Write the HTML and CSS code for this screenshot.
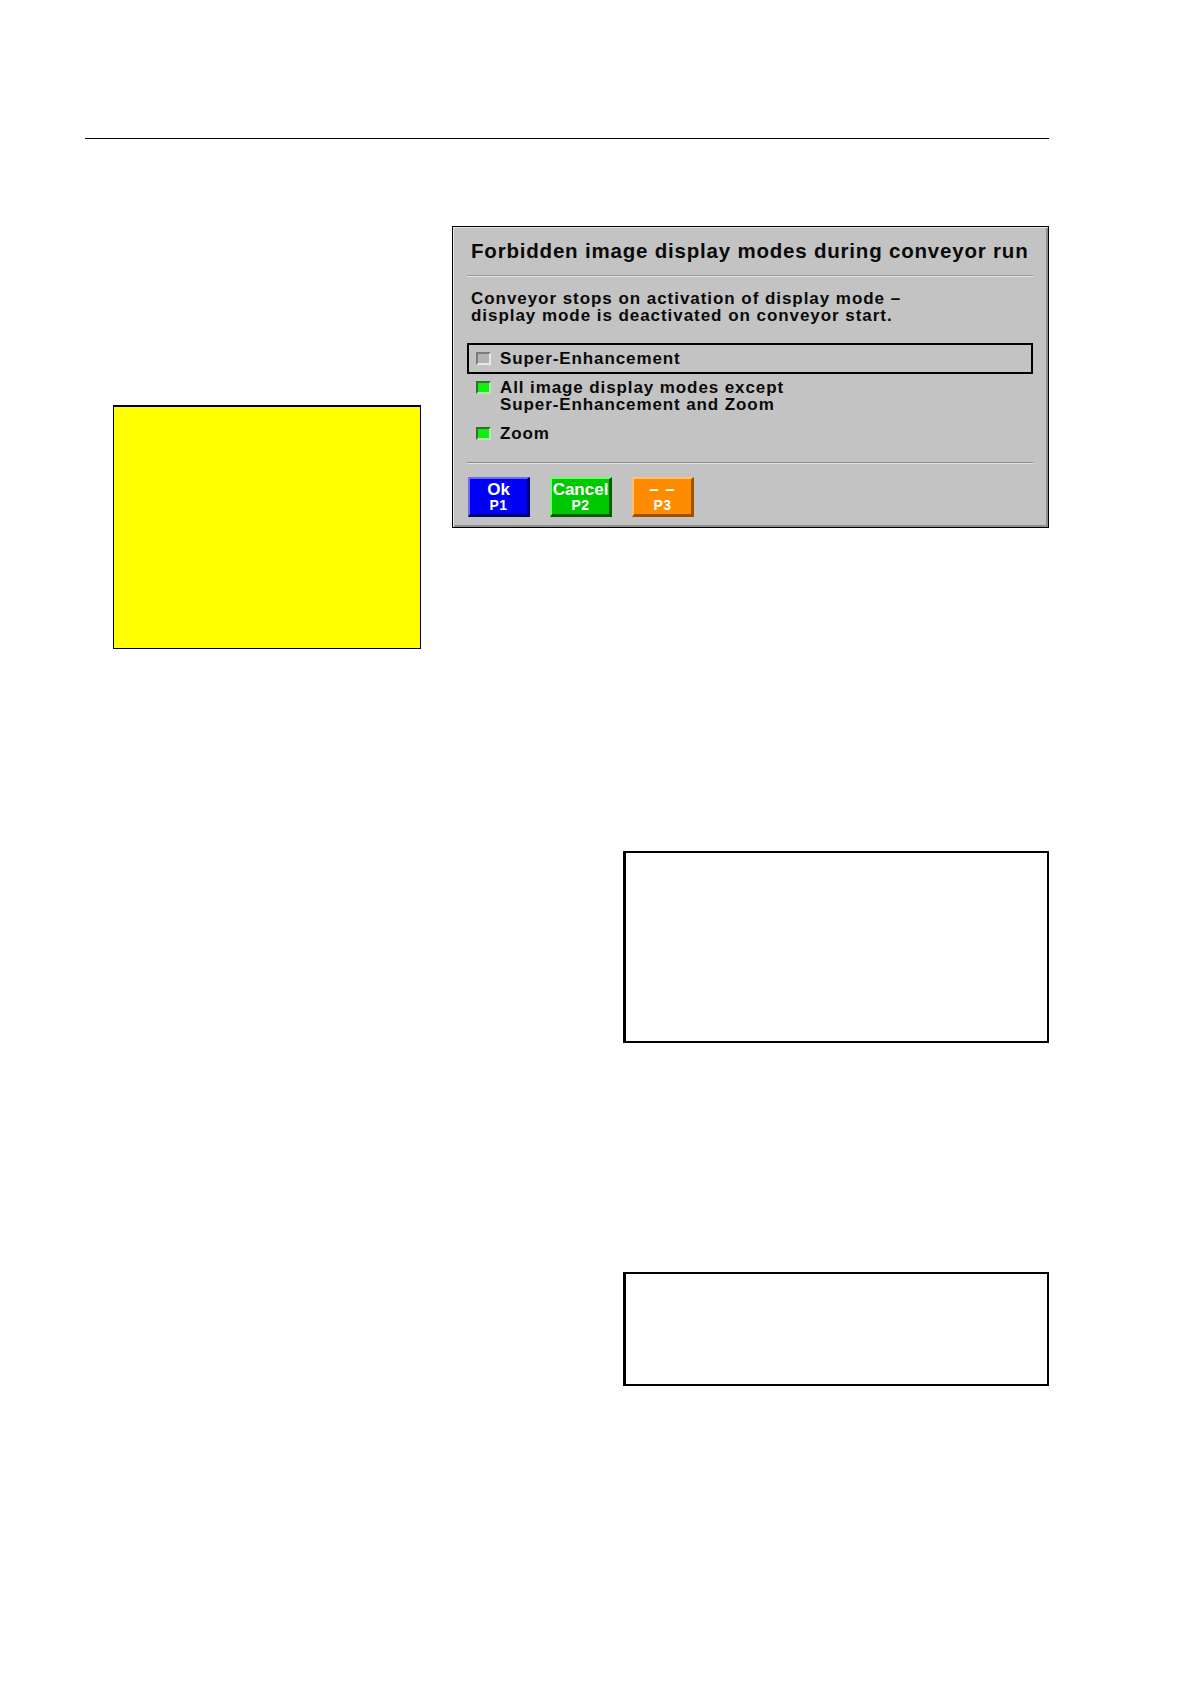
FILE: index.html
```html
<!DOCTYPE html>
<html>
<head>
<meta charset="utf-8">
<link rel="stylesheet" href="styles.css">
</head>
<body>
<div class="page">
  <div class="rule"></div>
  <div class="top-row">
    <div class="yellow"></div>
    <div class="dialog">
      <div class="title">Forbidden image display modes during conveyor run</div>
      <div class="sep"></div>
      <div class="desc">Conveyor stops on activation of display mode –<br>display mode is deactivated on conveyor start.</div>
      <div class="opt opt-focus">
        <span class="cb"></span>
        <span class="lbl">Super-Enhancement</span>
      </div>
      <div class="opt opt-two">
        <span class="cb cb-on"></span>
        <span class="lbl">All image display modes except<br>Super-Enhancement and Zoom</span>
      </div>
      <div class="opt opt-zoom">
        <span class="cb cb-on"></span>
        <span class="lbl">Zoom</span>
      </div>
      <div class="sep sep2"></div>
      <div class="buttons">
        <div class="btn btn-blue"><span class="b1">Ok</span><span class="b2">P1</span></div>
        <div class="btn btn-green"><span class="b1">Cancel</span><span class="b2">P2</span></div>
        <div class="btn btn-orange"><span class="b1">– –</span><span class="b2">P3</span></div>
      </div>
    </div>
  </div>
  <div class="box box1"></div>
  <div class="box box2"></div>
</div>
</body>
</html>
```

FILE: styles.css
```css
html, body {
  margin: 0;
  padding: 0;
  background: #ffffff;
}
body {
  width: 1190px;
  height: 1684px;
  font-family: "Liberation Sans", Arial, sans-serif;
}
.page {
  padding: 138px 141px 0 85px;
}
.rule {
  height: 0;
  border-top: 1.5px solid #000;
}
.top-row {
  display: flex;
  align-items: flex-start;
  margin-top: 87px;
}
.yellow {
  margin-left: 28px;
  margin-top: 179px;
  width: 306px;
  height: 241px;
  background: #ffff00;
  border: 1px solid #000;
  border-top-width: 2px;
}
.dialog {
  margin-left: auto;
  width: 566px;
  height: 300px;
  background: #c3c3c3;
  border: 1px solid #000;
  box-shadow: inset 1px 1px 0 #e6e6e6, inset -2px -2px 0 #8e8e8e;
  padding: 0 15px 0 14px;
  box-sizing: content-box;
  color: #0a0a0a;
  font-weight: bold;
  display: flex;
  flex-direction: column;
}
.title {
  padding-top: 12px;
  padding-left: 4px;
  font-size: 20.5px;
  line-height: 23px;
  letter-spacing: 0.8px;
  white-space: nowrap;
}
.sep {
  margin-top: 13px;
  height: 0;
  border-top: 1px solid #9a9a9a;
  border-bottom: 1px solid #e2e2e2;
}
.desc {
  margin-top: 13px;
  padding-left: 4px;
  font-size: 17px;
  line-height: 17px;
  letter-spacing: 0.95px;
  white-space: nowrap;
}
.opt {
  display: flex;
  align-items: flex-start;
  font-size: 17px;
  line-height: 17px;
  letter-spacing: 0.9px;
  white-space: nowrap;
}
.opt-focus {
  margin-top: 19px;
  height: 27px;
  align-items: center;
  border: 2px solid #000;
  padding-left: 7px;
}
.opt-two {
  margin-top: 5px;
  padding-left: 9px;
}
.opt-zoom {
  margin-top: 12px;
  padding-left: 9px;
}
.cb {
  flex: none;
  width: 15px;
  height: 13px;
  box-sizing: border-box;
  background: #b4b4b4;
  border-top: 2px solid #7c7c7c;
  border-left: 2px solid #7c7c7c;
  border-bottom: 2px solid #e8e8e8;
  border-right: 2px solid #e8e8e8;
  margin-right: 9px;
}
.opt-two .cb, .opt-zoom .cb {
  margin-top: 2px;
}
.cb-on {
  background: #10f010;
  border-top-color: #3a6a3a;
  border-left-color: #3a6a3a;
  border-bottom-color: #b0e8b0;
  border-right-color: #b0e8b0;
}
.sep2 {
  margin-top: 20px;
  border-top-color: #8a8a8a;
}
.buttons {
  display: flex;
  gap: 20px;
  margin-top: 13px;
  padding-left: 1px;
}
.btn {
  width: 62px;
  height: 40px;
  box-sizing: border-box;
  display: flex;
  flex-direction: column;
  align-items: center;
  justify-content: center;
  color: #ffffff;
  font-weight: bold;
  border-style: solid;
  border-width: 2px 3px 3px 2px;
}
.b1 {
  font-size: 17px;
  line-height: 17px;
}
.b2 {
  font-size: 14px;
  line-height: 15px;
  letter-spacing: 0.5px;
}
.btn-blue {
  background: #0000f8;
  border-color: #6a6aff #00006a #00006a #6a6aff;
}
.btn-green {
  background: #00c800;
  border-color: #70ff70 #006000 #006000 #70ff70;
}
.btn-orange {
  background: #ff8c00;
  border-color: #ffc070 #a05000 #a05000 #ffc070;
}
.btn-orange .b1 {
  letter-spacing: 1px;
}
.box {
  margin-left: auto;
  background: #fff;
  border: 2px solid #000;
  border-left-width: 3px;
  box-sizing: border-box;
  width: 426px;
}
.box1 {
  margin-top: 202px;
  height: 192px;
}
.box2 {
  margin-top: 229px;
  height: 114px;
}
```
